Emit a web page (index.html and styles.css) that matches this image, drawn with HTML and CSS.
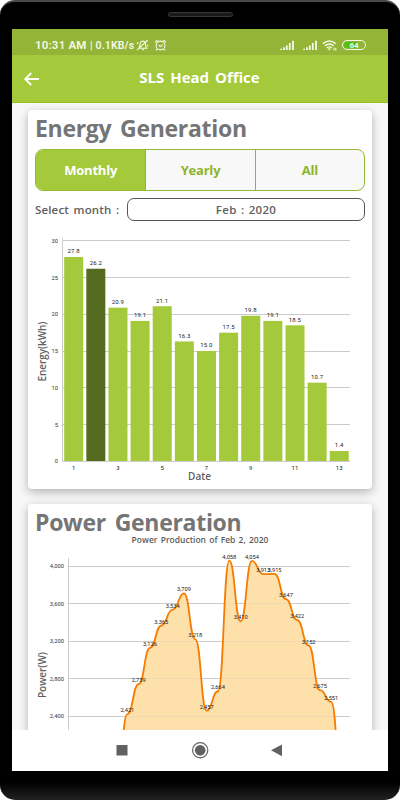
FILE: index.html
```html
<!DOCTYPE html>
<html lang="en">
<head>
<meta charset="utf-8">
<title>SLS Head Office</title>
<link rel="stylesheet" href="styles.css">
</head>
<body>
<div class="phone">
  <div class="bezel-top"><span class="speaker"></span></div>
  <div class="screen">
    <div class="status">
      <span class="clock">10:31 AM</span><span class="rate">| 0.1KB/s</span>
      <svg class="ico-bell" width="13" height="12" viewBox="0 0 13 12"><path d="M3 9.2C4 8 3.6 6 4.1 4.3 4.6 2.6 6 2 7 2.1 9 2.3 9.7 4 9.6 6 9.6 7.5 10 8.5 10.6 9.2ZM6 10.8h2M1 11.2 11.8 1M1 5 2 3M11.2 7.5 12 6"/></svg>
      <svg class="ico-alarm" width="13" height="12" viewBox="0 0 13 12"><circle cx="6.5" cy="6.5" r="4.4"/><path d="M1 3.3 3.6 1M12 3.3 9.4 1M4.5 6 6.4 7.6 8.5 5.6M3 10.2 2 11.4M10 10.2l1 1.2"/></svg>
      <span class="fill"></span>
      <svg class="ico-signal" width="15" height="10" viewBox="0 0 15 10"><path d="M1.2 10V8.8M4 10V7.3M6.8 10V5.4M9.8 10V3M13 10V.8"/></svg>
      <svg class="ico-signal second" width="15" height="10" viewBox="0 0 15 10"><path d="M1.2 10V8.8M4 10V7.3M6.8 10V5.4M9.8 10V3M13 10V.8"/></svg>
      <svg class="ico-wifi" width="15" height="11" viewBox="0 0 15 11"><path d="M.8 3.6Q7.3-1.6 13.8 3.6M2.8 5.8Q7.3 2 11.8 5.8M4.9 7.9Q7.3 5.9 9.7 7.9"/><path class="solid" d="M5.8 8.7 7.3 10.6 8.8 8.7Q7.3 7.8 5.8 8.7ZM11.5 7.5h1v3h-1zM13.3 8h1v2.5h-1z"/></svg>
      <span class="battery">64</span>
    </div>
    <div class="appbar">
      <svg class="back" width="16" height="14" viewBox="0 0 16 14"><path d="M7.2 1 1.2 7l6 6M1.2 7H15"/></svg>
      <h1>SLS Head Office</h1>
    </div>
    <div class="content">
      <section class="card">
        <h2 class="energy-title">Energy Generation</h2>
        <div class="tabs"><span class="tab active">Monthly</span><span class="tab">Yearly</span><span class="tab">All</span></div>
        <div class="month"><label>Select month :</label><span class="picker">Feb : 2020</span></div>
        <svg id="energy" class="chart" width="344" height="258" viewBox="28 228 344 258"></svg>
      </section>
      <section class="card">
        <h2 class="power-title">Power Generation</h2>
        <p class="sub">Power Production of Feb 2, 2020</p>
        <svg id="power" class="chart" width="344" height="230" viewBox="28 546 344 230"></svg>
      </section>
    </div>
    <div class="nav">
      <svg width="376" height="41" viewBox="12 730 376 41"><rect x="116.5" y="745" width="11" height="10.5"/><circle cx="200.2" cy="750.3" r="5.3"/><circle class="ring" cx="200.2" cy="750.3" r="7.6"/><path d="M271 750.3 282 744.5V756.2Z"/></svg>
    </div>
  </div>
</div>
<script src="script.js"></script>
</body>
</html>
```
FILE: styles.css
```css
* { box-sizing: border-box; }
body { margin: 0; background: #fff; font-family: "Open Sans", "Noto Sans", sans-serif; }
.phone { width: 400px; height: 800px; background: linear-gradient(#000 780px, #222 798px, #111); border-top: 2px solid #484848; border-radius: 15px; overflow: hidden; }
.bezel-top { height: 27px; display: flex; justify-content: center; padding-top: 10px; }
.speaker { width: 65px; height: 5px; border: 1px solid #383838; border-radius: 3px; background: #191919; }
.screen { width: 376px; height: 742px; margin-left: 12px; display: flex; flex-direction: column; background: #f7f7f7; overflow: hidden; }
.status { height: 26px; flex: none; display: flex; align-items: center; background: #93b436; color: #f6f9e8; font-family: Roboto, sans-serif; padding: 6px 22px 0 23px; }
.clock { font-size: 11.5px; font-weight: 600; letter-spacing: .2px; width: 55px; white-space: nowrap; }
.rate { font-size: 10.5px; font-weight: 600; letter-spacing: .15px; width: 46px; white-space: nowrap; }
.status svg { fill: none; stroke: #f6f9e8; stroke-width: 1.1; flex: none; }
.status .ico-alarm { margin-left: 5px; }
.fill { flex: 1; }
.status .ico-signal { stroke-width: 1.8; }
.status .second { margin-left: 8px; }
.status .ico-wifi { margin: 0 5px 0 4px; stroke-width: 1.4; }
.status .solid { fill: #f6f9e8; stroke: none; }
.battery { width: 24px; height: 10px; border: 1px solid #f6f9e8; border-radius: 5px; background: linear-gradient(90deg, #4fc414 66%, #93b436 66%) content-box; padding: 1px; font-size: 8px; font-weight: 700; line-height: 7px; text-align: center; }
.appbar { height: 48px; flex: none; display: flex; align-items: center; background: #a4c93b; border-bottom: 1px solid #94c11a; }
.back { margin-left: 12px; fill: none; stroke: #fff; stroke-width: 1.8; }
h1 { flex: 1; margin: 0 29px 3px 0; text-align: center; color: #fff; font-size: 15px; word-spacing: 2px; }
.content { height: 627px; flex: none; overflow: hidden; padding: 7px 16px 0; }
.card { width: 344px; height: 379px; margin-bottom: 15px; background: #fff; border-radius: 4px; box-shadow: 0 3px 10px rgba(0,0,0,.28); display: flex; flex-direction: column; }
h2 { flex: none; margin: 0 0 0 7px; height: 39px; font-size: 23px; line-height: 36px; color: #757575; white-space: nowrap; word-spacing: 3px; letter-spacing: -.29px; }
.tabs { flex: none; display: grid; grid-template-columns: 1fr 1fr 1fr; height: 42px; width: 330px; margin-left: 7px; border: 1px solid #93ba32; border-radius: 8px; background: #f8f8f8; overflow: hidden; }
.tab { display: flex; align-items: center; justify-content: center; color: #8db52c; font-size: 13px; font-weight: 700; letter-spacing: -.2px; padding-bottom: 1px; }
.tab + .tab { border-left: 1px solid #8fb91e; }
.active { background: #a4c93b; color: #fff; }
.month { display: flex; align-items: center; height: 23px; flex: none; margin: 7px 0 0 7px; font-size: 11.5px; font-weight: 600; color: #606060; }
.month label { width: 92px; white-space: nowrap; padding-bottom: 1px; word-spacing: 1.5px; letter-spacing: .15px; }
.picker { width: 238px; height: 23px; border: 1px solid #555; border-radius: 7px; text-align: center; line-height: 21px; letter-spacing: .3px; word-spacing: 1px; }
.chart { display: block; flex: none; margin-top: 7px; }
.sub { flex: none; margin: -9px 0 0; height: 12px; font-size: 8.5px; font-weight: 600; line-height: 11px; text-align: center; color: #5c5c5c; word-spacing: 1px; }
#power { margin-top: 0; }
.energy-title { height: 39px; }
.nav { height: 41px; flex: none; background: #fff; }
.nav svg { display: block; fill: #616161; }
.nav .ring { fill: none; stroke: #616161; stroke-width: 1.2; }
.grid { stroke: #ccc; stroke-width: 1; }
.val { font: 6px Roboto, sans-serif; fill: #222; text-anchor: middle; letter-spacing: .15px; }
.pval { font: 5.7px Roboto, sans-serif; fill: #222; text-anchor: middle; }
.tick { font: 5.8px Roboto, sans-serif; fill: #333; text-anchor: end; }
.bar { fill: #a4c93b; }
.bar.sel { fill: #556b1f; }
.axis { font: 600 10px "Open Sans", sans-serif; fill: #606060; text-anchor: middle; }
.area { fill: #fde0aa; }
.curve { fill: none; stroke: #f57c00; stroke-width: 1.8; }
```
FILE: script.js
```js
const NS = "http://www.w3.org/2000/svg";
function add(svg, tag, attrs, text) {
  const el = document.createElementNS(NS, tag);
  for (const k in attrs) el.setAttribute(k, attrs[k]);
  if (text !== undefined) el.textContent = text;
  svg.appendChild(el);
}

const energy = document.getElementById("energy");
const ey = v => 461.3 - v * 220.5 / 30;
for (let v = 0; v <= 30; v += 5) {
  add(energy, "path", { class: "grid", d: `M62.5 ${Math.floor(ey(v)) + .5}H350` });
  add(energy, "text", { class: "tick", x: 58, y: ey(v) + 2 }, v);
}
add(energy, "path", { class: "grid", d: "M62.5 238V461.5" });
[27.8, 26.2, 20.9, 19.1, 21.1, 16.3, 15, 17.5, 19.8, 19.1, 18.5, 10.7, 1.4].forEach((v, i) => {
  const x = 73.7 + i * 22.13;
  add(energy, "rect", { class: i === 1 ? "bar sel" : "bar", x: x - 9.5, y: ey(v), width: 19, height: 461 - ey(v) });
  add(energy, "text", { class: "val", x, y: ey(v) - 3.6 }, v.toFixed(1));
  if (i % 2 === 0) add(energy, "text", { class: "val", x, y: 469.8 }, i + 1);
});
add(energy, "text", { class: "axis", x: 199.5, y: 480, textLength: 23 }, "Date");
add(energy, "text", { class: "axis", transform: "translate(46 351.5) rotate(-90)", textLength: 60 }, "Energy(kWh)");

const power = document.getElementById("power");
const py = v => 716 - (v - 2400) * 150 / 1600;
const data = [1500, 2421, 2739, 3126, 3365, 3534, 3709, 3218, 2457, 2664, 4058, 3410, 4054, 3913, 3915, 3647, 3422, 3152, 2675, 2551, 1500];
const pts = data.map((v, i) => [116 + i * 11.33, py(v)]);
for (let v = 2400; v <= 4000; v += 400) {
  add(power, "path", { class: "grid", d: `M68 ${Math.round(py(v) - .1) + .5}H350` });
  add(power, "text", { class: "tick", x: 64, y: py(v) + 2 }, v.toLocaleString("en-US"));
}
add(power, "path", { class: "grid", d: "M68.5 558V776" });
let d = `M${pts[0]}`;
for (let i = 1; i < pts.length; i++) {
  const a = pts[i - 1], b = pts[i], m = (a[0] + b[0]) / 2;
  d += `C${m} ${a[1]} ${m} ${b[1]} ${b}`;
}
add(power, "path", { class: "area", d: d + "Z" });
for (let v = 2400; v <= 4000; v += 400) {
  add(power, "path", { class: "grid", opacity: .25, d: `M68 ${Math.round(py(v) - .1) + .5}H350` });
}
add(power, "path", { class: "curve", d });
pts.slice(1, -1).forEach((p, i) => {
  add(power, "text", { class: "pval", x: p[0], y: p[1] - 2 }, data[i + 1].toLocaleString("en-US"));
});
add(power, "text", { class: "axis", transform: "translate(46 675) rotate(-90)", textLength: 46 }, "Power(W)");
```
